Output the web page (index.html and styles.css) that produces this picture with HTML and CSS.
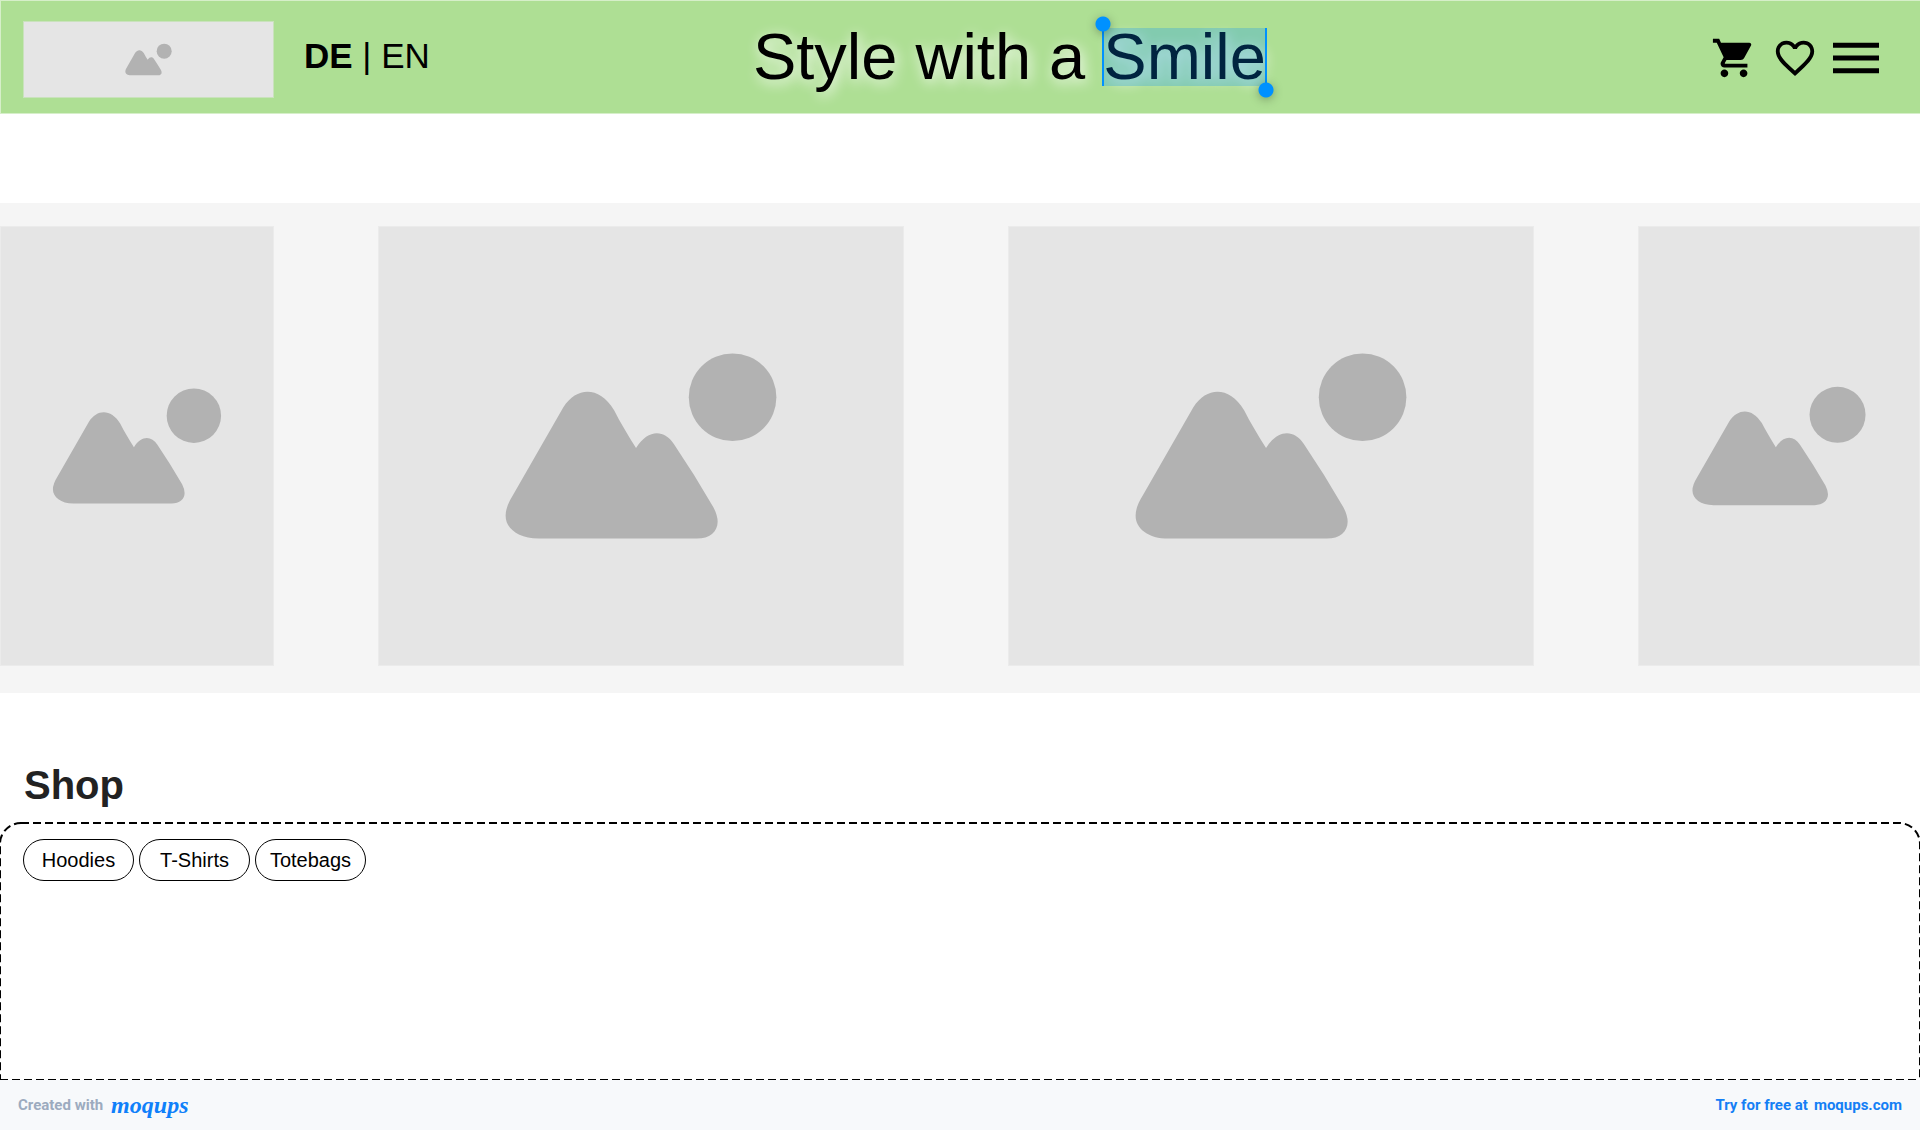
FILE: index.html
```html
<!DOCTYPE html>
<html lang="en">
<head>
<meta charset="utf-8">
<meta name="viewport" content="width=device-width, initial-scale=1">
<title>Style with a Smile</title>
<link rel="stylesheet" href="styles.css">
</head>
<body>
<svg class="sprite">
  <symbol id="placeholder" viewBox="0 0 440 440">
    <path d="M142 181C156 160 178 160 193 184C199 196 207 209 215 222C227 203 243 203 253 218Q274 249 293 282Q297 290 297 296C297 306 289 313 276 313H117C97 313 84 303 84 290Q84 281 91 270Z"/>
    <circle cx="312" cy="171" r="44"/>
  </symbol>
</svg>
<header class="header">
  <div class="brand">
    <a class="picture logo" href="#" aria-label="Home"><svg><use href="#placeholder"/></svg></a>
    <nav class="languages" aria-label="Language"><a href="#de"><b>DE</b></a> | <a href="#en">EN</a></nav>
  </div>
  <h1 class="slogan">Style with a <span class="selected">Smile</span></h1>
  <div class="actions">
    <button class="action" aria-label="Cart"><svg viewBox="0 0 24 24"><path d="M7 18c-1.1 0-1.99.9-1.99 2S5.9 22 7 22s2-.9 2-2-.9-2-2-2zM1 2v2h2l3.6 7.59-1.35 2.45c-.16.28-.25.61-.25.96 0 1.1.9 2 2 2h12v-2H7.42c-.14 0-.25-.11-.25-.25l.03-.12.9-1.63h7.45c.75 0 1.41-.41 1.75-1.03l3.58-6.49c.08-.14.12-.31.12-.48 0-.55-.45-1-1-1H5.21l-.94-2H1zm16 16c-1.1 0-1.99.9-1.99 2s.89 2 1.99 2 2-.9 2-2-.9-2-2-2z"/></svg></button>
    <button class="action" aria-label="Favourites"><svg viewBox="0 0 24 24"><path d="M16.5 3c-1.74 0-3.41.81-4.5 2.09C10.91 3.81 9.24 3 7.5 3 4.42 3 2 5.42 2 8.5c0 3.78 3.4 6.86 8.55 11.54L12 21.35l1.45-1.32C18.6 15.36 22 12.28 22 8.5 22 5.42 19.58 3 16.5 3zm-4.4 15.55l-.1.1-.1-.1C7.14 14.24 4 11.39 4 8.5 4 6.5 5.5 5 7.5 5c1.54 0 3.04.99 3.57 2.36h1.87C13.46 5.99 14.96 5 16.5 5c2 0 3.5 1.5 3.5 3.5 0 2.89-3.14 5.74-7.9 10.05z"/></svg></button>
    <button class="action" aria-label="Menu"><svg viewBox="3 3 18 18"><path d="M3 18h18v-2H3v2zm0-5h18v-2H3v2zm0-7v2h18V6H3z"/></svg></button>
  </div>
</header>
<main class="main">
  <section class="carousel" aria-label="Featured">
    <div class="picture"><svg><use href="#placeholder"/></svg></div>
    <div class="picture slide"><svg><use href="#placeholder"/></svg></div>
    <div class="picture slide"><svg><use href="#placeholder"/></svg></div>
    <div class="picture"><svg><use href="#placeholder"/></svg></div>
  </section>
  <h2 class="heading">Shop</h2>
  <section class="shop">
    <svg class="outline" aria-hidden="true"><rect class="frame" y="1" width="100%" rx="21"/><line x1="0" y1="100%" x2="100%" y2="100%"/></svg>
    <div class="categories">
      <button class="category">Hoodies</button>
      <button class="category">T-Shirts</button>
      <button class="category">Totebags</button>
    </div>
  </section>
</main>
<footer class="footer">
  <div class="credit">Created with <a class="wordmark" href="#moqups">moqups</a></div>
  <a class="trial" href="#trial"><span>Try for free at</span><span>moqups.com</span></a>
</footer>
</body>
</html>
```
FILE: styles.css
```css
* {
  box-sizing: border-box;
}

body {
  display: flex;
  flex-direction: column;
  min-height: 100vh;
  margin: 0;
  background: #fff;
  color: #000;
  font-family: "Liberation Sans", Arial, sans-serif;
}

a {
  color: inherit;
  text-decoration: none;
}

button {
  padding: 0;
  border: 0;
  background: none;
  color: inherit;
  font: inherit;
  cursor: pointer;
}

.sprite {
  display: none;
}

.header {
  display: grid;
  grid-template-columns: 25fr auto 21fr;
  align-items: center;
  padding: 20px 41px 15px 22px;
  border: 1px solid #d6efc9;
  border-right: 0;
  background: #aedf94;
}

.brand {
  display: flex;
  align-items: center;
  gap: 30px;
}

.picture {
  display: flex;
  min-width: 0;
  border: 1px solid #ebebeb;
  background: #e5e5e5;
}

.picture svg {
  width: 100%;
  height: 100%;
  fill: #b2b2b2;
}

.logo {
  width: 251px;
  height: 77px;
  border-color: #cae2bd;
}

.languages {
  padding-bottom: 8px;
  font-size: 35px;
  line-height: 40px;
  white-space: nowrap;
}

.slogan {
  margin: 0;
  padding-bottom: 5px;
  font-size: 65px;
  font-weight: 400;
  line-height: 58px;
  white-space: nowrap;
  text-shadow: 2px 3px 14px #fff;
}

/* Text selection with its two drag handles */
.selected {
  position: relative;
  display: inline-block;
}

.selected::before {
  content: "";
  position: absolute;
  inset: 0 -1px;
  border: solid #0091ff;
  border-width: 0 2px;
  background: rgba(0, 145, 255, 0.25);
}

.selected::after {
  content: "";
  position: absolute;
  inset: -12px -8px;
  background:
    radial-gradient(circle at 8px 8px, #0091ff 7px, transparent 8px),
    radial-gradient(circle at calc(100% - 8px) calc(100% - 8px), #0091ff 7px, transparent 8px);
  filter: drop-shadow(0 2px 5px rgba(0, 0, 0, 0.3));
}

.actions {
  display: flex;
  justify-content: flex-end;
  gap: 15px;
  padding-bottom: 4px;
}

.action {
  width: 46px;
  height: 46px;
}

.action svg {
  display: block;
  width: 100%;
  height: 100%;
}

.main {
  display: flex;
  flex: 1;
  flex-direction: column;
}

.carousel {
  display: grid;
  grid-template-columns: 274fr 526fr 526fr 282fr;
  gap: 104px;
  margin-top: 89px;
  padding: 23px 0 27px;
  background: #f5f5f5;
}

.slide {
  aspect-ratio: 526 / 440;
}

.heading {
  margin: 69px 24px 14px;
  color: #222;
  font-size: 40px;
  line-height: 46px;
}

.shop {
  position: relative;
  flex: 1;
  padding: 17px 23px;
}

/* Dashed frame that runs on below the fold line */
.outline {
  position: absolute;
  inset: 0;
  width: 100%;
  height: 100%;
  overflow: hidden;
  fill: none;
  stroke: #000;
  stroke-width: 2px;
  stroke-dasharray: 8 4;
  pointer-events: none;
}

.frame {
  height: calc(100% + 40px);
}

.categories {
  position: relative;
  display: flex;
  gap: 5px;
}

.category {
  width: 111px;
  height: 42px;
  border: 1px solid #000;
  border-radius: 21px;
  background: #fff;
  font-size: 20px;
}

.footer {
  display: flex;
  align-items: center;
  justify-content: space-between;
  height: 50px;
  padding: 0 18px;
  background: #f7f9fb;
  font: 700 15px/20px Roboto, sans-serif;
}

.credit {
  display: flex;
  align-items: center;
  gap: 8px;
  color: #9cabbf;
}

.wordmark {
  color: #0f80fa;
  font: italic 700 24px/24px "Liberation Serif", serif;
}

.trial {
  display: flex;
  gap: 6px;
  color: #147ff5;
}
```
